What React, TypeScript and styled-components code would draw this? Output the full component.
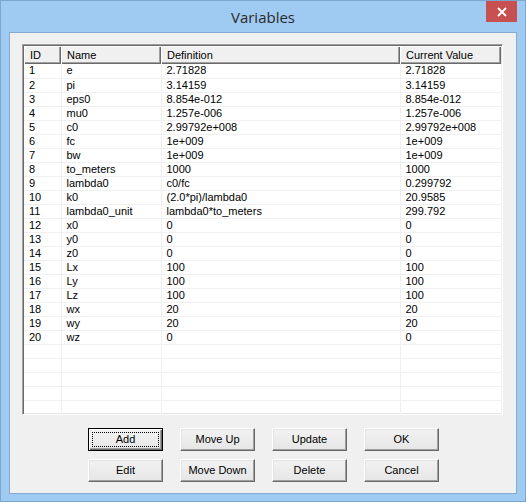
import React from "react";
import styled, { createGlobalStyle } from "styled-components";

type Variable = { id: number; name: string; definition: string; value: string };

const variables: Variable[] = [
  { id: 1, name: "e", definition: "2.71828", value: "2.71828" },
  { id: 2, name: "pi", definition: "3.14159", value: "3.14159" },
  { id: 3, name: "eps0", definition: "8.854e-012", value: "8.854e-012" },
  { id: 4, name: "mu0", definition: "1.257e-006", value: "1.257e-006" },
  { id: 5, name: "c0", definition: "2.99792e+008", value: "2.99792e+008" },
  { id: 6, name: "fc", definition: "1e+009", value: "1e+009" },
  { id: 7, name: "bw", definition: "1e+009", value: "1e+009" },
  { id: 8, name: "to_meters", definition: "1000", value: "1000" },
  { id: 9, name: "lambda0", definition: "c0/fc", value: "0.299792" },
  { id: 10, name: "k0", definition: "(2.0*pi)/lambda0", value: "20.9585" },
  { id: 11, name: "lambda0_unit", definition: "lambda0*to_meters", value: "299.792" },
  { id: 12, name: "x0", definition: "0", value: "0" },
  { id: 13, name: "y0", definition: "0", value: "0" },
  { id: 14, name: "z0", definition: "0", value: "0" },
  { id: 15, name: "Lx", definition: "100", value: "100" },
  { id: 16, name: "Ly", definition: "100", value: "100" },
  { id: 17, name: "Lz", definition: "100", value: "100" },
  { id: 18, name: "wx", definition: "20", value: "20" },
  { id: 19, name: "wy", definition: "20", value: "20" },
  { id: 20, name: "wz", definition: "0", value: "0" },
];

const columns = [
  { title: "ID", width: 37 },
  { title: "Name", width: 100 },
  { title: "Definition", width: 239 },
  { title: "Current Value", width: 101 },
];

const buttons = [
  { label: "Add", focused: true },
  { label: "Move Up" },
  { label: "Update" },
  { label: "OK" },
  { label: "Edit" },
  { label: "Move Down" },
  { label: "Delete" },
  { label: "Cancel" },
];

const EMPTY_ROWS = 6;

const GlobalStyle = createGlobalStyle`
  html, body {
    margin: 0;
    padding: 0;
    background: #ffffff;
  }
  * {
    box-sizing: border-box;
  }
`;

const Window = styled.div`
  width: 526px;
  height: 502px;
  display: flex;
  flex-direction: column;
  background: #9fcaf1;
  border: 1px solid #7ba6d2;
  padding: 0 8px 7px 8px;
`;

const TitleBar = styled.div`
  height: 31px;
  display: grid;
  grid-template-columns: 1fr auto 1fr;
  align-items: center;
`;

const Title = styled.div`
  grid-column: 2;
  font-family: "Open Sans", "Noto Sans", sans-serif;
  font-size: 15px;
  color: #2b2b2b;
  padding-top: 1px;
`;

const CloseButton = styled.div`
  grid-column: 3;
  justify-self: end;
  align-self: start;
  width: 31px;
  height: 21px;
  background: #c75050;
  color: #ffffff;
  display: flex;
  align-items: center;
  justify-content: center;
`;

const Client = styled.div`
  flex: 1;
  background: #f0f0f0;
  border: 1px solid #86a9cf;
  padding: 11px 13px 0 12px;
  display: flex;
  flex-direction: column;
  font-family: "Liberation Sans", Arial, sans-serif;
  font-size: 11px;
  color: #000000;
`;

const ListView = styled.div`
  height: 371px;
  overflow: hidden;
  background: #ffffff;
  border: 1px solid;
  border-color: #a0a0a0 #ffffff #ffffff #a0a0a0;
  box-shadow: inset 1px 1px 0 #696969, inset -1px -1px 0 #e3e3e3;
  padding: 1px;
`;

const Table = styled.table`
  border-collapse: collapse;
  table-layout: fixed;
  width: 477px;
`;

const HeaderCell = styled.th<{ $width: number }>`
  width: ${({ $width }) => $width}px;
  height: 18px;
  padding: 0 0 1px 6px;
  text-align: left;
  font-weight: normal;
  background: #f0f0f0;
  white-space: nowrap;
  box-shadow: inset 1px 1px 0 #ffffff, inset -1px -1px 0 #696969,
    inset -2px -2px 0 #a0a0a0;
`;

const Row = styled.tr`
  height: 14px;
`;

const Cell = styled.td`
  height: 14px;
  padding: 0 0 0 5px;
  line-height: 13px;
  white-space: nowrap;
  overflow: hidden;
  border-right: 1px solid #f0f0f0;
  border-bottom: 1px solid #f0f0f0;
`;

const ButtonGrid = styled.div`
  display: grid;
  grid-template-columns: repeat(4, 75px);
  column-gap: 17px;
  row-gap: 8px;
  margin: 13px 0 0 66px;
`;

const Button = styled.div<{ $focused?: boolean }>`
  position: relative;
  height: 23px;
  display: flex;
  align-items: center;
  justify-content: center;
  background: linear-gradient(#f2f2f2, #e6e6e6);
  border: 1px solid;
  border-color: ${({ $focused }) =>
    $focused ? "#000000" : "#ffffff #696969 #696969 #ffffff"};
  box-shadow: ${({ $focused }) =>
    $focused
      ? "inset 1px 1px 0 #ffffff, inset -1px -1px 0 #696969, inset -2px -2px 0 #a0a0a0"
      : "inset -1px -1px 0 #a0a0a0, inset 1px 1px 0 #e3e3e3"};
  padding-bottom: 1px;
`;

const FocusRing = styled.div`
  position: absolute;
  inset: 3px;
  border: 1px dotted #000000;
`;

const CloseIcon = () => (
  <svg width="10" height="10" viewBox="0 0 10 10">
    <path d="M1 1 L9 9 M9 1 L1 9" stroke="#ffffff" strokeWidth="1.8" />
  </svg>
);

export default function App() {
  return (
    <>
      <GlobalStyle />
      <Window>
        <TitleBar>
          <Title>Variables</Title>
          <CloseButton>
            <CloseIcon />
          </CloseButton>
        </TitleBar>
        <Client>
          <ListView>
            <Table>
              <thead>
                <tr>
                  {columns.map((c) => (
                    <HeaderCell key={c.title} $width={c.width}>
                      {c.title}
                    </HeaderCell>
                  ))}
                </tr>
              </thead>
              <tbody>
                {variables.map((v) => (
                  <Row key={v.id}>
                    <Cell>{v.id}</Cell>
                    <Cell>{v.name}</Cell>
                    <Cell>{v.definition}</Cell>
                    <Cell>{v.value}</Cell>
                  </Row>
                ))}
                {Array.from({ length: EMPTY_ROWS }).map((_, i) => (
                  <Row key={`empty-${i}`}>
                    <Cell />
                    <Cell />
                    <Cell />
                    <Cell />
                  </Row>
                ))}
              </tbody>
            </Table>
          </ListView>
          <ButtonGrid>
            {buttons.map((b) => (
              <Button key={b.label} $focused={b.focused}>
                {b.focused && <FocusRing />}
                {b.label}
              </Button>
            ))}
          </ButtonGrid>
        </Client>
      </Window>
    </>
  );
}
